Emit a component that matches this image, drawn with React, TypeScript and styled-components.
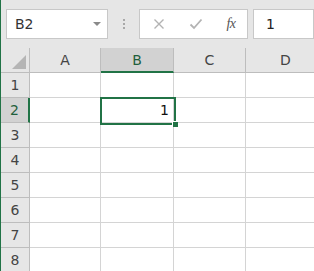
import styled, { createGlobalStyle } from "styled-components";

const Global = createGlobalStyle`
  html, body { margin: 0; padding: 0; background: #fff; }
  body { font-family: "DejaVu Sans", "Liberation Sans", sans-serif; }
`;

const green = "#217346";
const cols = [
  { name: "A", w: 71 },
  { name: "B", w: 73 },
  { name: "C", w: 72 },
  { name: "D", w: 80 },
];
const rows = [1, 2, 3, 4, 5, 6, 7, 8];
const selCol = "B";
const selRow = 2;

const Frame = styled.div`
  width: 314px;
  height: 271px;
  overflow: hidden;
  border-left: 1px solid ${green};
  box-sizing: border-box;
  display: flex;
  flex-direction: column;
  background: #e6e6e6;
`;

const Toolbar = styled.div`
  height: 48px;
  flex: none;
  display: flex;
  align-items: flex-start;
  padding: 9px 0 0 5px;
  box-sizing: border-box;
`;

const Box = styled.div<{ w?: number }>`
  height: 30px;
  width: ${({ w }) => (w ? `${w}px` : "auto")};
  flex: ${({ w }) => (w ? "none" : "1")};
  background: #fff;
  border: 1px solid #c8c8c8;
  box-sizing: border-box;
  display: flex;
  align-items: center;
`;

const NameText = styled.span`
  flex: 1;
  padding-left: 8px;
  font-size: 14px;
  color: #333;
`;

const Caret = styled.span`
  width: 0;
  height: 0;
  border-left: 4px solid transparent;
  border-right: 4px solid transparent;
  border-top: 4px solid #8a8a8a;
  margin-right: 6px;
`;

const Dots = styled.div`
  width: 31px;
  flex: none;
  height: 30px;
  display: flex;
  flex-direction: column;
  align-items: center;
  justify-content: center;
  gap: 2px;
  & > i {
    width: 2px;
    height: 2px;
    background: #a8a8a8;
  }
`;

const IconSlot = styled.span<{ w: number }>`
  width: ${({ w }) => w}px;
  flex: none;
  display: flex;
  justify-content: center;
  align-items: center;
`;

const Fx = styled.span`
  font-family: "Liberation Serif", serif;
  font-style: italic;
  font-size: 14px;
  color: #555;
  letter-spacing: -0.5px;
`;

const FormulaText = styled.span`
  padding-left: 12px;
  font-size: 14px;
  color: #222;
`;

const Gap = styled.div`
  width: 5px;
  flex: none;
`;

const Sheet = styled.div`
  position: relative;
  flex: 1;
  display: grid;
  grid-template-columns: 29px ${cols.map((c) => `${c.w}px`).join(" ")};
  grid-auto-rows: 25px;
  align-content: start;
  background: #fff;
`;

const Corner = styled.div`
  background: #e6e6e6;
  border-right: 1px solid #bdbdbd;
  border-bottom: 1px solid #bdbdbd;
  position: relative;
  &::after {
    content: "";
    position: absolute;
    right: 3px;
    bottom: 3px;
    width: 0;
    height: 0;
    border-left: 14px solid transparent;
    border-bottom: 14px solid #b5b5b5;
  }
`;

const ColHead = styled.div<{ sel?: boolean }>`
  background: ${({ sel }) => (sel ? "#d2d2d2" : "#e6e6e6")};
  border-right: 1px solid #bdbdbd;
  border-bottom: ${({ sel }) => (sel ? `2px solid ${green}` : "1px solid #bdbdbd")};
  color: ${({ sel }) => (sel ? "#1f5f3c" : "#444")};
  font-size: 14px;
  display: flex;
  align-items: center;
  justify-content: center;
  padding-bottom: ${({ sel }) => (sel ? "0" : "1px")};
`;

const RowHead = styled.div<{ sel?: boolean }>`
  background: ${({ sel }) => (sel ? "#d2d2d2" : "#e6e6e6")};
  border-right: ${({ sel }) => (sel ? `2px solid ${green}` : "1px solid #bdbdbd")};
  border-bottom: 1px solid #bdbdbd;
  color: ${({ sel }) => (sel ? "#1f5f3c" : "#444")};
  font-size: 14px;
  display: flex;
  align-items: center;
  justify-content: center;
`;

const Cell = styled.div`
  border-right: 1px solid #d4d4d4;
  border-bottom: 1px solid #d4d4d4;
  font-size: 14px;
  color: #111;
  display: flex;
  align-items: center;
  justify-content: flex-end;
  padding-right: 4px;
`;

const Selection = styled.div`
  position: absolute;
  left: 99px;
  top: 49px;
  width: 76px;
  height: 28px;
  border: 2px solid ${green};
  box-sizing: border-box;
  pointer-events: none;
  &::after {
    content: "";
    position: absolute;
    right: -4px;
    bottom: -4px;
    width: 5px;
    height: 5px;
    background: ${green};
    border-left: 1px solid #fff;
    border-top: 1px solid #fff;
  }
`;

const CrossIcon = () => (
  <svg width="12" height="12" viewBox="0 0 12 12">
    <path d="M1.5 1.5 L10.5 10.5 M10.5 1.5 L1.5 10.5" stroke="#b3b3b3" strokeWidth="1.4" fill="none" />
  </svg>
);

const CheckIcon = () => (
  <svg width="14" height="12" viewBox="0 0 14 12">
    <path d="M1.5 6.5 L5 10 L12.5 1.5" stroke="#b3b3b3" strokeWidth="1.8" fill="none" />
  </svg>
);

export default function App() {
  return (
    <>
      <Global />
      <Frame>
        <Toolbar>
          <Box w={102}>
            <NameText>B2</NameText>
            <Caret />
          </Box>
          <Dots>
            <i />
            <i />
            <i />
          </Dots>
          <Box w={109}>
            <IconSlot w={37}>
              <CrossIcon />
            </IconSlot>
            <IconSlot w={38}>
              <CheckIcon />
            </IconSlot>
            <IconSlot w={32}>
              <Fx>fx</Fx>
            </IconSlot>
          </Box>
          <Gap />
          <Box>
            <FormulaText>1</FormulaText>
          </Box>
        </Toolbar>
        <Sheet>
          <Corner />
          {cols.map((c) => (
            <ColHead key={c.name} sel={c.name === selCol}>
              {c.name}
            </ColHead>
          ))}
          {rows.map((r) => (
            <RowCells key={r} r={r} />
          ))}
          <Selection />
        </Sheet>
      </Frame>
    </>
  );
}

function RowCells({ r }: { r: number }) {
  return (
    <>
      <RowHead sel={r === selRow}>{r}</RowHead>
      {cols.map((c) => (
        <Cell key={c.name}>{c.name === selCol && r === selRow ? "1" : ""}</Cell>
      ))}
    </>
  );
}
